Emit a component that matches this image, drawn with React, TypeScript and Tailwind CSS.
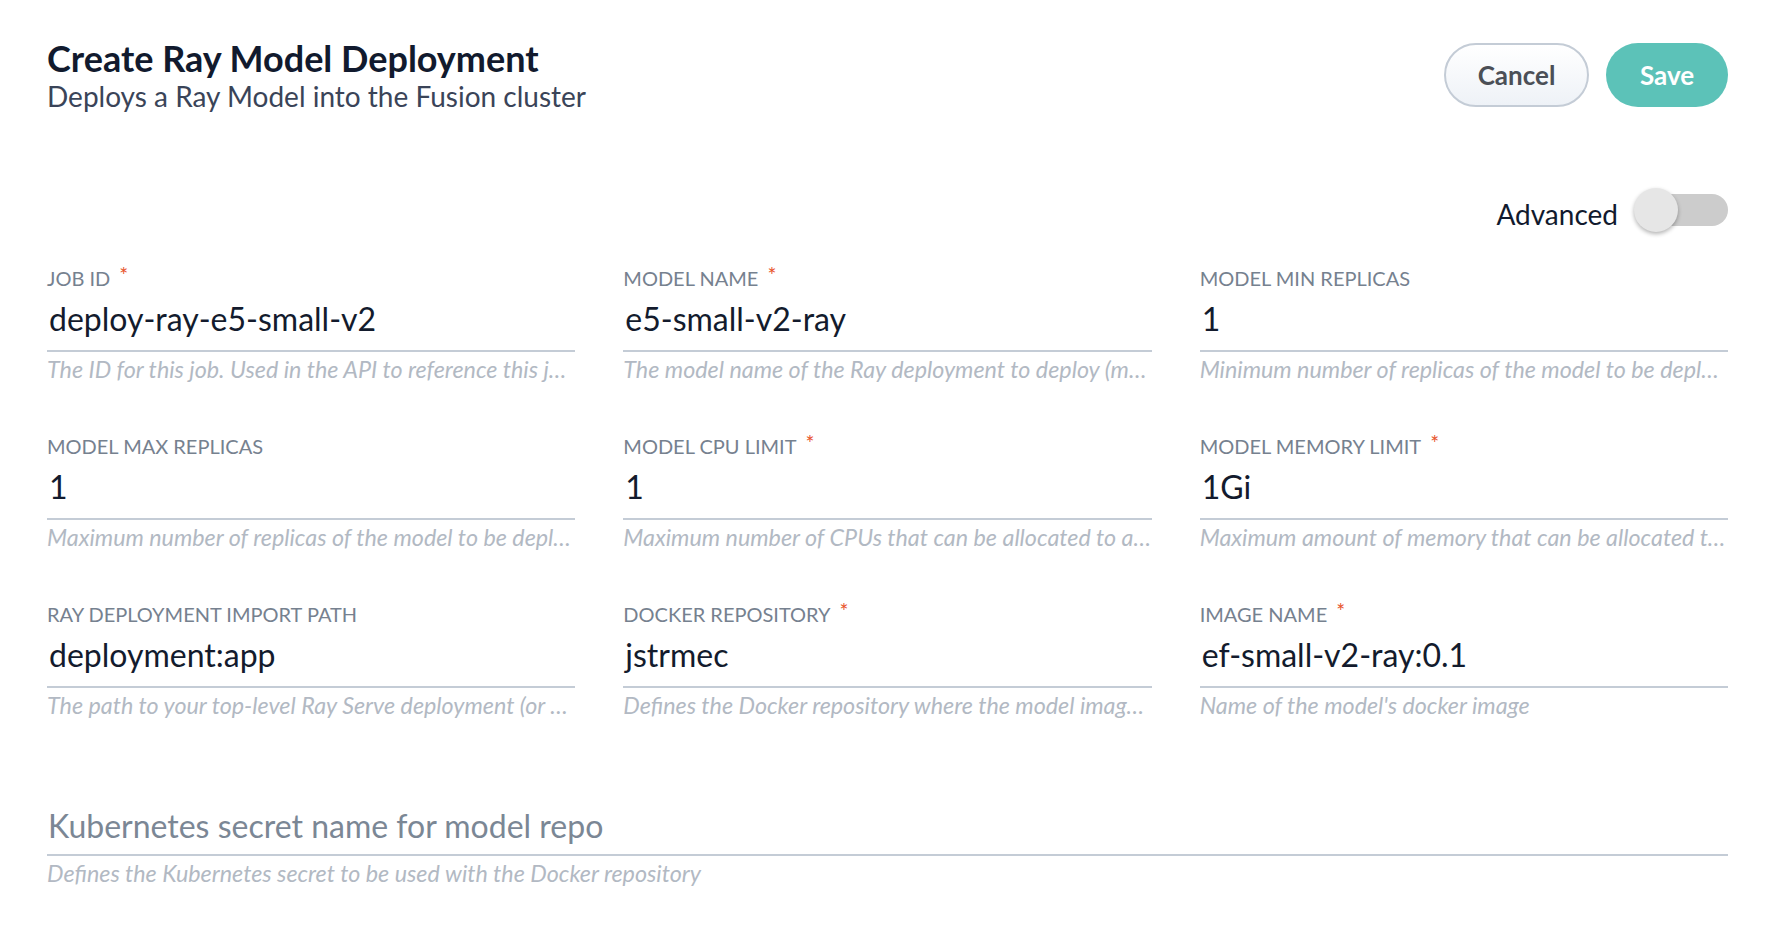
import { useState } from "react";

type Field = {
  label: string;
  value: string;
  help: string;
  required?: boolean;
};

const fields: Field[] = [
  {
    label: "Job ID",
    value: "deploy-ray-e5-small-v2",
    help: "The ID for this job. Used in the API to reference this job. Allowed: a-z, 0-9, dash (-) and underscore (_). Maximum 63 characters.",
    required: true,
  },
  {
    label: "Model Name",
    value: "e5-small-v2-ray",
    help: "The model name of the Ray deployment to deploy (must be a valid DNS subdomain name)",
    required: true,
  },
  {
    label: "Model Min Replicas",
    value: "1",
    help: "Minimum number of replicas of the model to be deployed",
  },
  {
    label: "Model Max Replicas",
    value: "1",
    help: "Maximum number of replicas of the model to be deployed",
  },
  {
    label: "Model CPU Limit",
    value: "1",
    help: "Maximum number of CPUs that can be allocated to a single model replica",
    required: true,
  },
  {
    label: "Model Memory Limit",
    value: "1Gi",
    help: "Maximum amount of memory that can be allocated to a single model replica",
    required: true,
  },
  {
    label: "Ray Deployment Import Path",
    value: "deployment:app",
    help: "The path to your top-level Ray Serve deployment (or the same passed to `serve run`)",
  },
  {
    label: "Docker Repository",
    value: "jstrmec",
    help: "Defines the Docker repository where the model image is located",
    required: true,
  },
  {
    label: "Image Name",
    value: "ef-small-v2-ray:0.1",
    help: "Name of the model's docker image",
    required: true,
  },
];

function FormField({ f }: { f: Field }) {
  return (
    <div className="min-w-0">
      <label className="block h-[24px] text-[20px] leading-[24px] uppercase text-[#76818f]">
        {f.label}
        {f.required && <span className="relative top-[-3px] ml-[9px] text-[21px] text-[#e8542c]">*</span>}
      </label>
      <div className="pt-[11px] pb-[13px] pl-[2px] border-b-2 border-[#c4ccd6] text-[32px] leading-[36px] text-[#131b2d]">
        {f.value}
      </div>
      <p className="mt-[3px] truncate text-[23.3px] leading-[28px] italic text-[#b2b9c3]">
        {f.help}
      </p>
    </div>
  );
}

export default function App() {
  const [advanced, setAdvanced] = useState(false);

  return (
    <div className="min-h-screen bg-white font-['Lato',sans-serif] pl-[47px] pr-[64px] pt-[38px]">
      <div className="flex justify-between items-start">
        <div>
          <h1 className="text-[36px] leading-[40px] font-bold text-[#111a2e]">
            Create Ray Model Deployment
          </h1>
          <p className="mt-[2px] text-[28px] leading-[32px] text-[#3a4458]">
            Deploys a Ray Model into the Fusion cluster
          </p>
        </div>
        <div className="flex gap-[17px] mt-[5px]">
          <button className="w-[145px] h-[64px] rounded-full border-2 border-[#c4ccd6] bg-gradient-to-b from-white to-[#eef2f7] text-[26px] font-bold text-[#4b4f56]">
            Cancel
          </button>
          <button className="w-[122px] h-[64px] rounded-full bg-[#5cc2b8] text-[26px] font-bold text-white">
            Save
          </button>
        </div>
      </div>

      <div className="mt-[76px] flex justify-end items-center h-[44px] gap-[17px]">
        <span className="pt-[8px] text-[28px] leading-[32px] text-[#111a2e]">Advanced</span>
        <button
          onClick={() => setAdvanced(!advanced)}
          className={`relative w-[93px] h-[32px] rounded-full ${advanced ? "bg-[#9fdcd5]" : "bg-[#cccccc]"}`}
        >
          <span
            className={`absolute top-[-6px] w-[44px] h-[44px] rounded-full shadow-[0_2px_4px_rgba(0,0,0,0.3)] ${
              advanced ? "left-[49px] bg-[#5cc2b8]" : "left-[-1px] bg-[#e6e6e6]"
            }`}
          />
        </button>
      </div>

      <div className="mt-[34px] grid grid-cols-3 gap-x-[48px] gap-y-[51px]">
        {fields.map((f) => (
          <FormField key={f.label} f={f} />
        ))}
      </div>

      <div className="mt-[89px]">
        <div className="pb-[10px] pl-[1px] border-b-2 border-[#c4ccd6] text-[32px] leading-[36px] text-[#7b8795]">
          Kubernetes secret name for model repo
        </div>
        <p className="mt-[3px] text-[23.3px] leading-[28px] italic text-[#b2b9c3]">
          Defines the Kubernetes secret to be used with the Docker repository
        </p>
      </div>
    </div>
  );
}
